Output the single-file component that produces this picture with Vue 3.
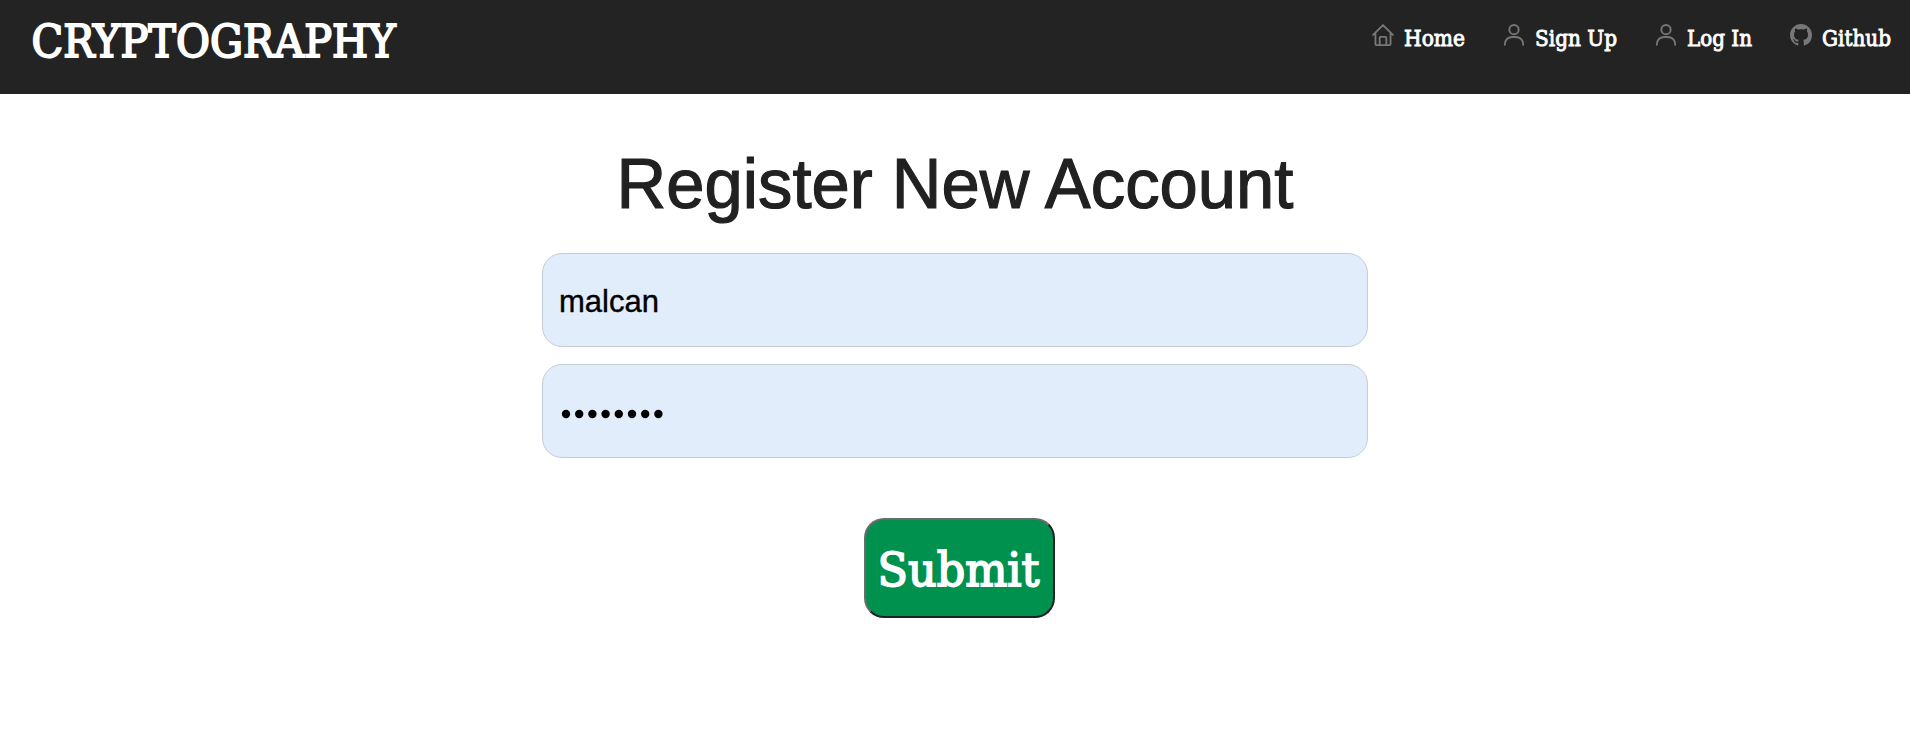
<script setup>
const links = [
  { label: 'Home', icon: 'home', width: 61, advance: 131 },
  { label: 'Sign Up', icon: 'person', width: 82, advance: 152 },
  { label: 'Log In', icon: 'person', width: 65, advance: 135 },
  { label: 'Github', icon: 'github', width: 69, advance: 120 },
]
</script>

<template>
  <div class="page">
    <header class="bar">
      <svg class="brand" width="380" height="64">
        <text x="1.5" y="42" textLength="364" lengthAdjust="spacingAndGlyphs">CRYPTOGRAPHY</text>
      </svg>
      <nav class="nav">
        <a v-for="link in links" :key="link.label" class="link" :style="{ width: link.advance + 'px' }">
          <svg class="icon" width="22" height="22" viewBox="0 0 16 16">
            <path v-if="link.icon === 'home'" d="M.8 7.9 8 .8l7.2 7.1M2.5 6.4v8.2c0 .5.3.8.8.8h9.4c.5 0 .8-.3.8-.8V6.4M5.6 15.2V9.9c0-.3.2-.5.5-.5h3.8c.3 0 .5.2.5.5v5.3" fill="none" stroke="#777" stroke-width="1.35" stroke-linecap="round" stroke-linejoin="round" />
            <g v-else-if="link.icon === 'person'" fill="none" stroke="#777" stroke-width="1.4" stroke-linecap="round">
              <circle cx="8" cy="4.1" r="3.4" />
              <path d="M1.3 15.1c0-3.5 2.4-5.7 5.7-5.7h2c3.3 0 5.7 2.2 5.7 5.7" />
            </g>
            <path v-else fill="#777" d="M8 0C3.58 0 0 3.58 0 8c0 3.54 2.29 6.53 5.47 7.59.4.07.55-.17.55-.38 0-.19-.01-.82-.01-1.49-2.01.37-2.53-.49-2.69-.94-.09-.23-.48-.94-.82-1.13-.28-.15-.68-.52-.01-.53.63-.01 1.08.58 1.23.82.72 1.21 1.87.87 2.33.66.07-.52.28-.87.51-1.07-1.78-.2-3.64-.89-3.64-3.95 0-.87.31-1.59.82-2.15-.08-.2-.36-1.02.08-2.12 0 0 .67-.21 2.2.82.64-.18 1.32-.27 2-.27s1.36.09 2 .27c1.53-1.04 2.2-.82 2.2-.82.44 1.1.16 1.92.08 2.12.51.56.82 1.27.82 2.15 0 3.07-1.87 3.75-3.65 3.95.29.25.54.73.54 1.48 0 1.07-.01 1.93-.01 2.2 0 .21.15.46.55.38A8 8 0 0 0 16 8c0-4.42-3.58-8-8-8" />
          </svg>
          <svg class="label" :width="link.width + 4" height="36">
            <text x="0" y="24" :textLength="link.width" lengthAdjust="spacingAndGlyphs">{{ link.label }}</text>
          </svg>
        </a>
      </nav>
    </header>
    <main class="form">
      <svg class="title" width="690" height="100">
        <text x="6.5" y="68" textLength="677" lengthAdjust="spacingAndGlyphs">Register New Account</text>
      </svg>
      <div class="field">
        <svg width="110" height="92">
          <text class="value" x="0" y="58" textLength="100" lengthAdjust="spacingAndGlyphs">malcan</text>
        </svg>
      </div>
      <div class="field">
        <svg width="120" height="92">
          <circle v-for="n in 8" :key="n" :cx="7 + (n - 1) * 13.2" cy="49" r="4.2" />
        </svg>
      </div>
      <button class="submit">
        <svg width="187" height="96">
          <text x="11.5" y="65.5" textLength="162" lengthAdjust="spacingAndGlyphs">Submit</text>
        </svg>
      </button>
    </main>
  </div>
</template>

<style>
body { margin: 0; background: #fff; }
</style>

<style scoped>
.page { height: 752px; overflow: hidden; }
svg { display: block; flex: none; overflow: visible; }
.bar {
  height: 94px;
  box-sizing: border-box;
  background: #232323;
  display: flex;
  justify-content: space-between;
  padding: 15px 0 0 30px;
}
.brand text {
  font: 45.5px "DejaVu Serif", serif;
  fill: #fff;
  stroke: #fff;
  stroke-width: 2px;
}
.nav { display: flex; }
.link { display: flex; color: #fff; }
.icon { margin: 9px 10px 0 0; }
.label { margin-top: 7px; }
.label text {
  font: 22px "DejaVu Serif", serif;
  fill: #fff;
  stroke: #fff;
  stroke-width: .9px;
}
.form { display: flex; flex-direction: column; align-items: center; padding-top: 46px; }
.title { margin-bottom: 13px; }
.title text { font: 71px "Liberation Sans", Arial, sans-serif; fill: #212121; stroke: #212121; stroke-width: 1.2px; }
.field {
  width: 826px;
  height: 94px;
  box-sizing: border-box;
  border: 1px solid #c5cdd3;
  border-radius: 20px;
  background: #e2edfc;
  padding-left: 16px;
  margin-bottom: 17px;
}
.value { font: 32px "Liberation Sans", Arial, sans-serif; fill: #000; stroke: #000; stroke-width: .4px; }
.submit {
  width: 191px;
  height: 100px;
  box-sizing: border-box;
  margin: 43px 0 0 9px;
  padding: 0;
  border: 2px solid;
  border-color: #6b6b6b #212121 #212121 #6b6b6b;
  border-radius: 20px;
  background: #00914e;
}
.submit text { font: 47px "DejaVu Serif", serif; fill: #fff; stroke: #fff; stroke-width: 1.8px; }
</style>
